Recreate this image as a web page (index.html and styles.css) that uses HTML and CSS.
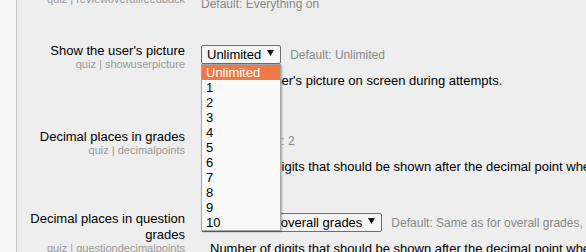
FILE: index.html
```html
<!DOCTYPE html>
<html lang="en">
<head>
  <meta charset="UTF-8" />
  <title>Quiz settings</title>
  <link rel="stylesheet" href="styles.css">
</head>
<body>
  <div class="content">
    <div class="settings">

      <div class="row row-first">
        <div class="label-col">
          <div class="label">Review options</div>
          <div class="sub">quiz | reviewoverallfeedback</div>
        </div>
        <div class="field">
          <div class="default first-default">Default: Everything on</div>
        </div>
      </div>

      <div class="row">
        <div class="label-col">
          <div class="label">Show the user's picture</div>
          <div class="sub">quiz | showuserpicture</div>
        </div>
        <div class="field">
          <div class="line">
            <div class="select-wrap">
              <span class="select">Unlimited <svg class="arrow" width="7" height="6" viewBox="0 0 7 6"><polygon points="0,0 7,0 3.5,6" /></svg></span>
              <ul class="popup">
                <li class="active">Unlimited</li>
                <li>1</li>
                <li>2</li>
                <li>3</li>
                <li>4</li>
                <li>5</li>
                <li>6</li>
                <li>7</li>
                <li>8</li>
                <li>9</li>
                <li>10</li>
              </ul>
            </div>
            <span class="default">Default: Unlimited</span>
          </div>
          <div class="desc">Show the user's picture on screen during attempts.</div>
        </div>
      </div>

      <div class="row row-grades">
        <div class="label-col">
          <div class="label">Decimal places in grades</div>
          <div class="sub">quiz | decimalpoints</div>
        </div>
        <div class="field">
          <div class="line">
            <span class="select">2 <svg class="arrow" width="7" height="6" viewBox="0 0 7 6"><polygon points="0,0 7,0 3.5,6" /></svg></span>
            <span class="default">Default: 2</span>
          </div>
          <div class="desc">Number of digits that should be shown after the decimal point when displaying grades.</div>
        </div>
      </div>

      <div class="row">
        <div class="label-col">
          <div class="label">Decimal places in question grades</div>
          <div class="sub">quiz | questiondecimalpoints</div>
        </div>
        <div class="field">
          <div class="line">
            <span class="select">Same as for overall grades <svg class="arrow" width="7" height="6" viewBox="0 0 7 6"><polygon points="0,0 7,0 3.5,6" /></svg></span>
            <span class="default">Default: Same as for overall grades, shown in the quiz</span>
          </div>
          <div class="desc">Number of digits that should be shown after the decimal point when displaying the grades for individual questions.</div>
        </div>
      </div>

    </div>
  </div>
</body>
</html>
```

FILE: styles.css
```css
html {
  overflow: hidden;
}
body {
  margin: 0;
  padding: 0;
  background: #f7f7f7;
  font-family: 'Liberation Sans', Arial, sans-serif;
  color: #000;
}
.content {
  margin-left: 16px;
  border-left: 1px solid #c8c8c8;
  background: #eeeeee;
  height: 100vh;
  width: 1000px;
  overflow: hidden;
}
.settings {
  display: flex;
  flex-direction: column;
  gap: 38px;
  margin-top: -22px;
}
.row {
  display: flex;
  align-items: flex-start;
}
.row-first {
  margin-bottom: -7px;
}
.row-grades {
  margin-top: 2px;
  margin-bottom: -2px;
}
.label-col {
  width: 160px;
  margin-left: 8px;
  text-align: right;
}
.label {
  font-size: 13px;
  line-height: 16px;
}
.sub {
  font-size: 11px;
  line-height: 10px;
  color: #999;
}
.field {
  margin-left: 16px;
  padding-top: 2px;
  flex: 1;
}
.first-default {
  margin-top: 17px;
}
.line {
  display: flex;
  align-items: baseline;
  gap: 9px;
  white-space: nowrap;
}
.select-wrap {
  position: relative;
}
.select {
  display: inline-flex;
  align-items: center;
  gap: 6px;
  height: 17px;
  padding: 0 6px 0 5px;
  border: 1px solid #6e6e6e;
  border-radius: 2px;
  background: #f4f4f4;
  font-size: 13px;
  line-height: 17px;
}
.arrow {
  fill: #111;
  margin-top: -3px;
}
.default {
  font-size: 12px;
  line-height: 15px;
  color: #888;
}
.desc {
  margin-top: 9px;
  padding-left: 9px;
  font-size: 13px;
  line-height: 16px;
  white-space: nowrap;
}
.popup {
  position: absolute;
  top: 100%;
  left: 0;
  right: 0;
  z-index: 5;
  margin: 0;
  padding: 0;
  list-style: none;
  background: #f9f9f9;
  border: 1px solid #a6a6a6;
  box-shadow: 1px 1px 2px rgba(0, 0, 0, 0.3);
}
.popup li {
  padding-left: 4px;
  font-size: 13px;
  line-height: 15px;
}
.popup li.active {
  background: #f07746;
  color: #fff;
}
```
